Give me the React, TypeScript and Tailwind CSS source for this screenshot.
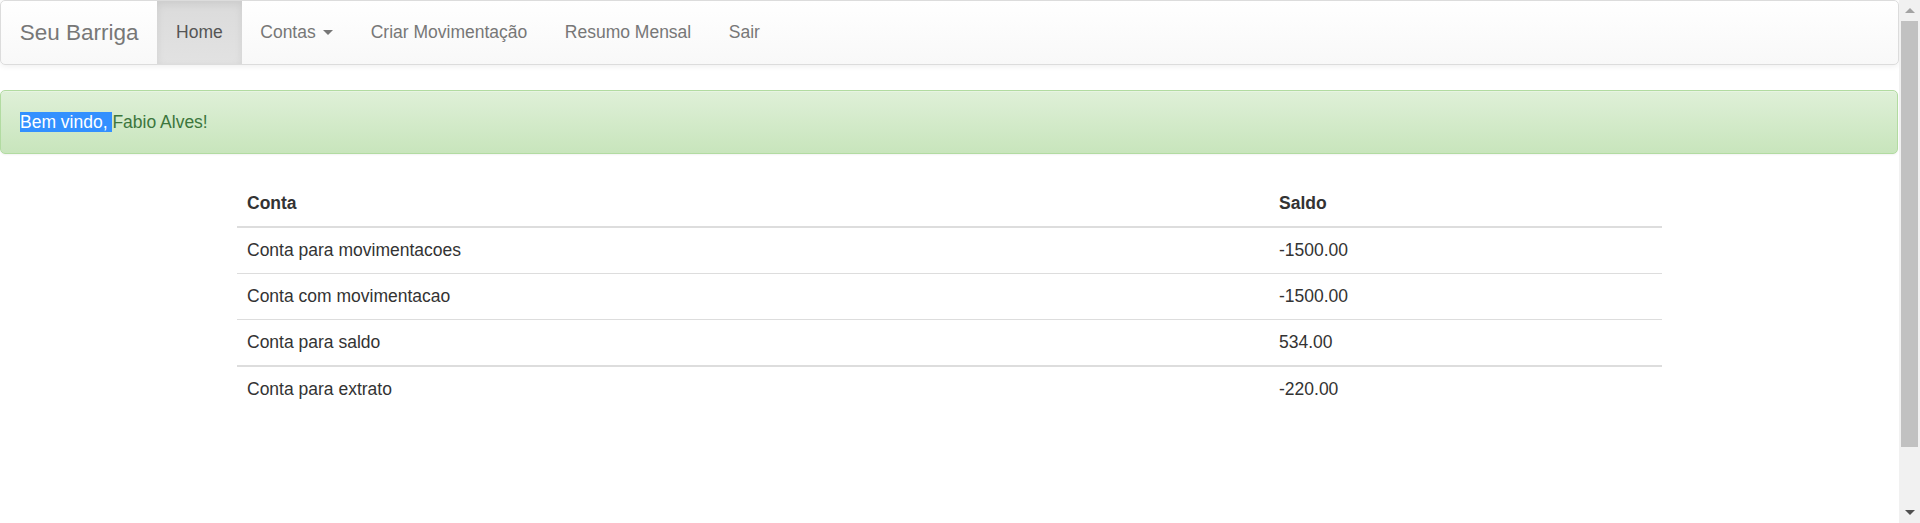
import React from "react";

const rows: { group: number; conta: string; saldo: string }[] = [
  { group: 0, conta: "Conta para movimentacoes", saldo: "-1500.00" },
  { group: 0, conta: "Conta com movimentacao", saldo: "-1500.00" },
  { group: 0, conta: "Conta para saldo", saldo: "534.00" },
  { group: 1, conta: "Conta para extrato", saldo: "-220.00" },
];

function NavItem({ children, active }: { children: React.ReactNode; active?: boolean }) {
  return (
    <div
      className={
        "flex items-center h-full px-[18.75px] leading-[25px] " +
        (active
          ? "bg-gradient-to-b from-[#dbdbdb] to-[#e2e2e2] shadow-[inset_0_3px_9px_rgba(0,0,0,0.075)] text-[#555]"
          : "text-[#777]")
      }
    >
      {children}
    </div>
  );
}

export default function App() {
  return (
    <div
      className="flex w-[1920px] h-[523px] overflow-hidden bg-white text-[17.5px] text-[#333]"
      style={{ fontFamily: '"Liberation Sans", Arial, sans-serif' }}
    >
      <div className="flex-1 flex flex-col min-w-0">
        {/* Navbar */}
        <div className="h-[65px] border border-[#dcdcdc] rounded-[5px] bg-gradient-to-b from-white to-[#f8f8f8] shadow-[0_1px_6px_rgba(0,0,0,0.075)] flex items-stretch">
          <div className="flex items-center px-[18.75px] text-[22.5px] leading-[25px] text-[#777]">
            Seu Barriga
          </div>
          <NavItem active>Home</NavItem>
          <NavItem>
            <span>Contas</span>
            <span className="ml-[7.5px] inline-block w-0 h-0 border-t-[5px] border-t-[#777] border-x-[5px] border-x-transparent" />
          </NavItem>
          <NavItem>Criar Movimentação</NavItem>
          <NavItem>Resumo Mensal</NavItem>
          <NavItem>Sair</NavItem>
        </div>

        {/* Alert */}
        <div className="mt-[25px] mr-[1px] h-[64px] border border-[#b2dba1] rounded-[5px] bg-gradient-to-b from-[#dff0d8] to-[#c8e5bc] shadow-[inset_0_1px_0_rgba(255,255,255,0.25),0_1px_2px_rgba(0,0,0,0.05)] px-[19px] py-[18.5px] leading-[25px] text-[#3c763d]">
          <p className="whitespace-pre">
            <span className="bg-[#3390ff] text-white">{"Bem vindo, "}</span>
            <span>{"Fabio Alves!"}</span>
          </p>
        </div>

        {/* Table */}
        <div className="mt-[27px] w-[1425px] mx-auto">
          <div className="flex border-b-[2.5px] border-[#dddddd] font-bold leading-[25px]">
            <div className="w-[1032px] px-[10px] py-[10px]">Conta</div>
            <div className="flex-1 px-[10px] py-[10px]">Saldo</div>
          </div>
          {rows.map((r, i) => (
            <div
              key={i}
              className={
                "flex leading-[25px] " +
                (i === 0
                  ? ""
                  : r.group !== rows[i - 1].group
                  ? "border-t-[2.5px] border-[#dddddd]"
                  : "border-t border-[#dddddd]")
              }
            >
              <div className="w-[1032px] px-[10px] py-[10px]">{r.conta}</div>
              <div className="flex-1 px-[10px] py-[10px]">{r.saldo}</div>
            </div>
          ))}
        </div>
      </div>

      {/* Fake scrollbar */}
      <div className="w-[21px] h-full bg-[#f1f1f1] flex flex-col items-center">
        <div className="h-[21px] flex items-center justify-center">
          <span className="inline-block w-0 h-0 border-b-[5px] border-b-[#a3a3a3] border-x-[5px] border-x-transparent" />
        </div>
        <div className="w-[17px] h-[426px] bg-[#c1c1c1]" />
        <div className="flex-1" />
        <div className="h-[21px] flex items-center justify-center">
          <span className="inline-block w-0 h-0 border-t-[5px] border-t-[#505050] border-x-[5px] border-x-transparent" />
        </div>
      </div>
    </div>
  );
}
